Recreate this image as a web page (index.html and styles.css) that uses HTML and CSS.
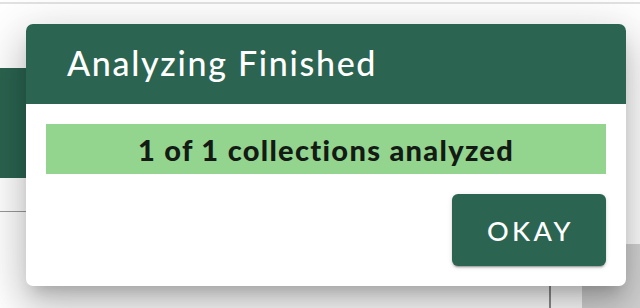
FILE: index.html
```html
<!DOCTYPE html>
<html lang="en">
<head>
<meta charset="utf-8">
<title>Analyzing Finished</title>
<link rel="stylesheet" href="styles.css">
</head>
<body>
<div class="page">
  <div class="topline"></div>
  <div class="backdrop">
    <div class="left-col">
      <div class="left-card"></div>
      <div class="left-rule"></div>
    </div>
    <div class="mid-col">
      <div class="mid-cell"></div>
    </div>
    <div class="right-col"></div>
  </div>
  <div class="dialog" role="dialog" aria-labelledby="dlg-title">
    <div class="dialog-header">
      <h1 id="dlg-title" class="dialog-title">Analyzing Finished</h1>
    </div>
    <div class="dialog-body">
      <div class="status-bar">1 of 1 collections analyzed</div>
      <div class="actions">
        <button class="btn-okay" type="button">OKAY</button>
      </div>
    </div>
  </div>
</div>
</body>
</html>
```

FILE: styles.css
```css
html, body {
  margin: 0;
  padding: 0;
  background: #ffffff;
}

.page {
  position: relative;
  width: 640px;
  height: 308px;
  overflow: hidden;
  font-family: Lato, "Open Sans", sans-serif;
}

.topline {
  height: 2px;
  margin-top: 2px;
  background: #e2e2e2;
}

.backdrop {
  display: flex;
  height: 304px;
}

.left-col {
  width: 40px;
  padding-top: 64px;
}

.left-card {
  height: 110px;
  background: #2b6450;
}

.left-rule {
  margin-top: 33px;
  height: 1px;
  background: #9a9a9a;
}

.mid-col {
  width: 511px;
  display: flex;
  flex-direction: column;
  justify-content: flex-end;
}

.mid-cell {
  height: 60px;
  border-right: 2px solid #8e8e8e;
}

.right-col {
  flex: 1;
  margin-left: 31px;
  margin-top: 240px;
  background: #d4d4d4;
}

.dialog {
  position: absolute;
  left: 26px;
  top: 24px;
  width: 600px;
  height: 262px;
  background: #ffffff;
  border-radius: 7px;
  overflow: hidden;
  box-shadow: 0 11px 15px -7px rgba(0, 0, 0, 0.2),
              0 24px 38px 3px rgba(0, 0, 0, 0.14),
              0 9px 46px 8px rgba(0, 0, 0, 0.12);
  display: flex;
  flex-direction: column;
}

.dialog-header {
  height: 80px;
  background: #2b6450;
  display: flex;
  align-items: center;
  padding-left: 41px;
}

.dialog-title {
  margin: 0;
  color: #ffffff;
  font-family: Lato, sans-serif;
  font-weight: 500;
  font-size: 34px;
  line-height: 1;
  letter-spacing: 1.7px;
  padding-bottom: 2px;
}

.dialog-body {
  padding: 20px;
  display: flex;
  flex-direction: column;
  gap: 20px;
}

.status-bar {
  height: 50px;
  background: #93d58e;
  color: #141b14;
  font-family: Lato, sans-serif;
  font-weight: 900;
  font-size: 29px;
  letter-spacing: 1.3px;
  display: flex;
  align-items: center;
  justify-content: center;
}

.actions {
  display: flex;
  justify-content: flex-end;
}

.btn-okay {
  width: 154px;
  height: 72px;
  border: none;
  border-radius: 6px;
  background: #2b6450;
  color: #ffffff;
  font-family: Lato, sans-serif;
  font-weight: 500;
  font-size: 27px;
  letter-spacing: 3.5px;
  padding: 0 0 0 3px;
  box-shadow: 0 3px 1px -2px rgba(0, 0, 0, 0.2),
              0 2px 2px 0 rgba(0, 0, 0, 0.14),
              0 1px 5px 0 rgba(0, 0, 0, 0.12);
}
```
